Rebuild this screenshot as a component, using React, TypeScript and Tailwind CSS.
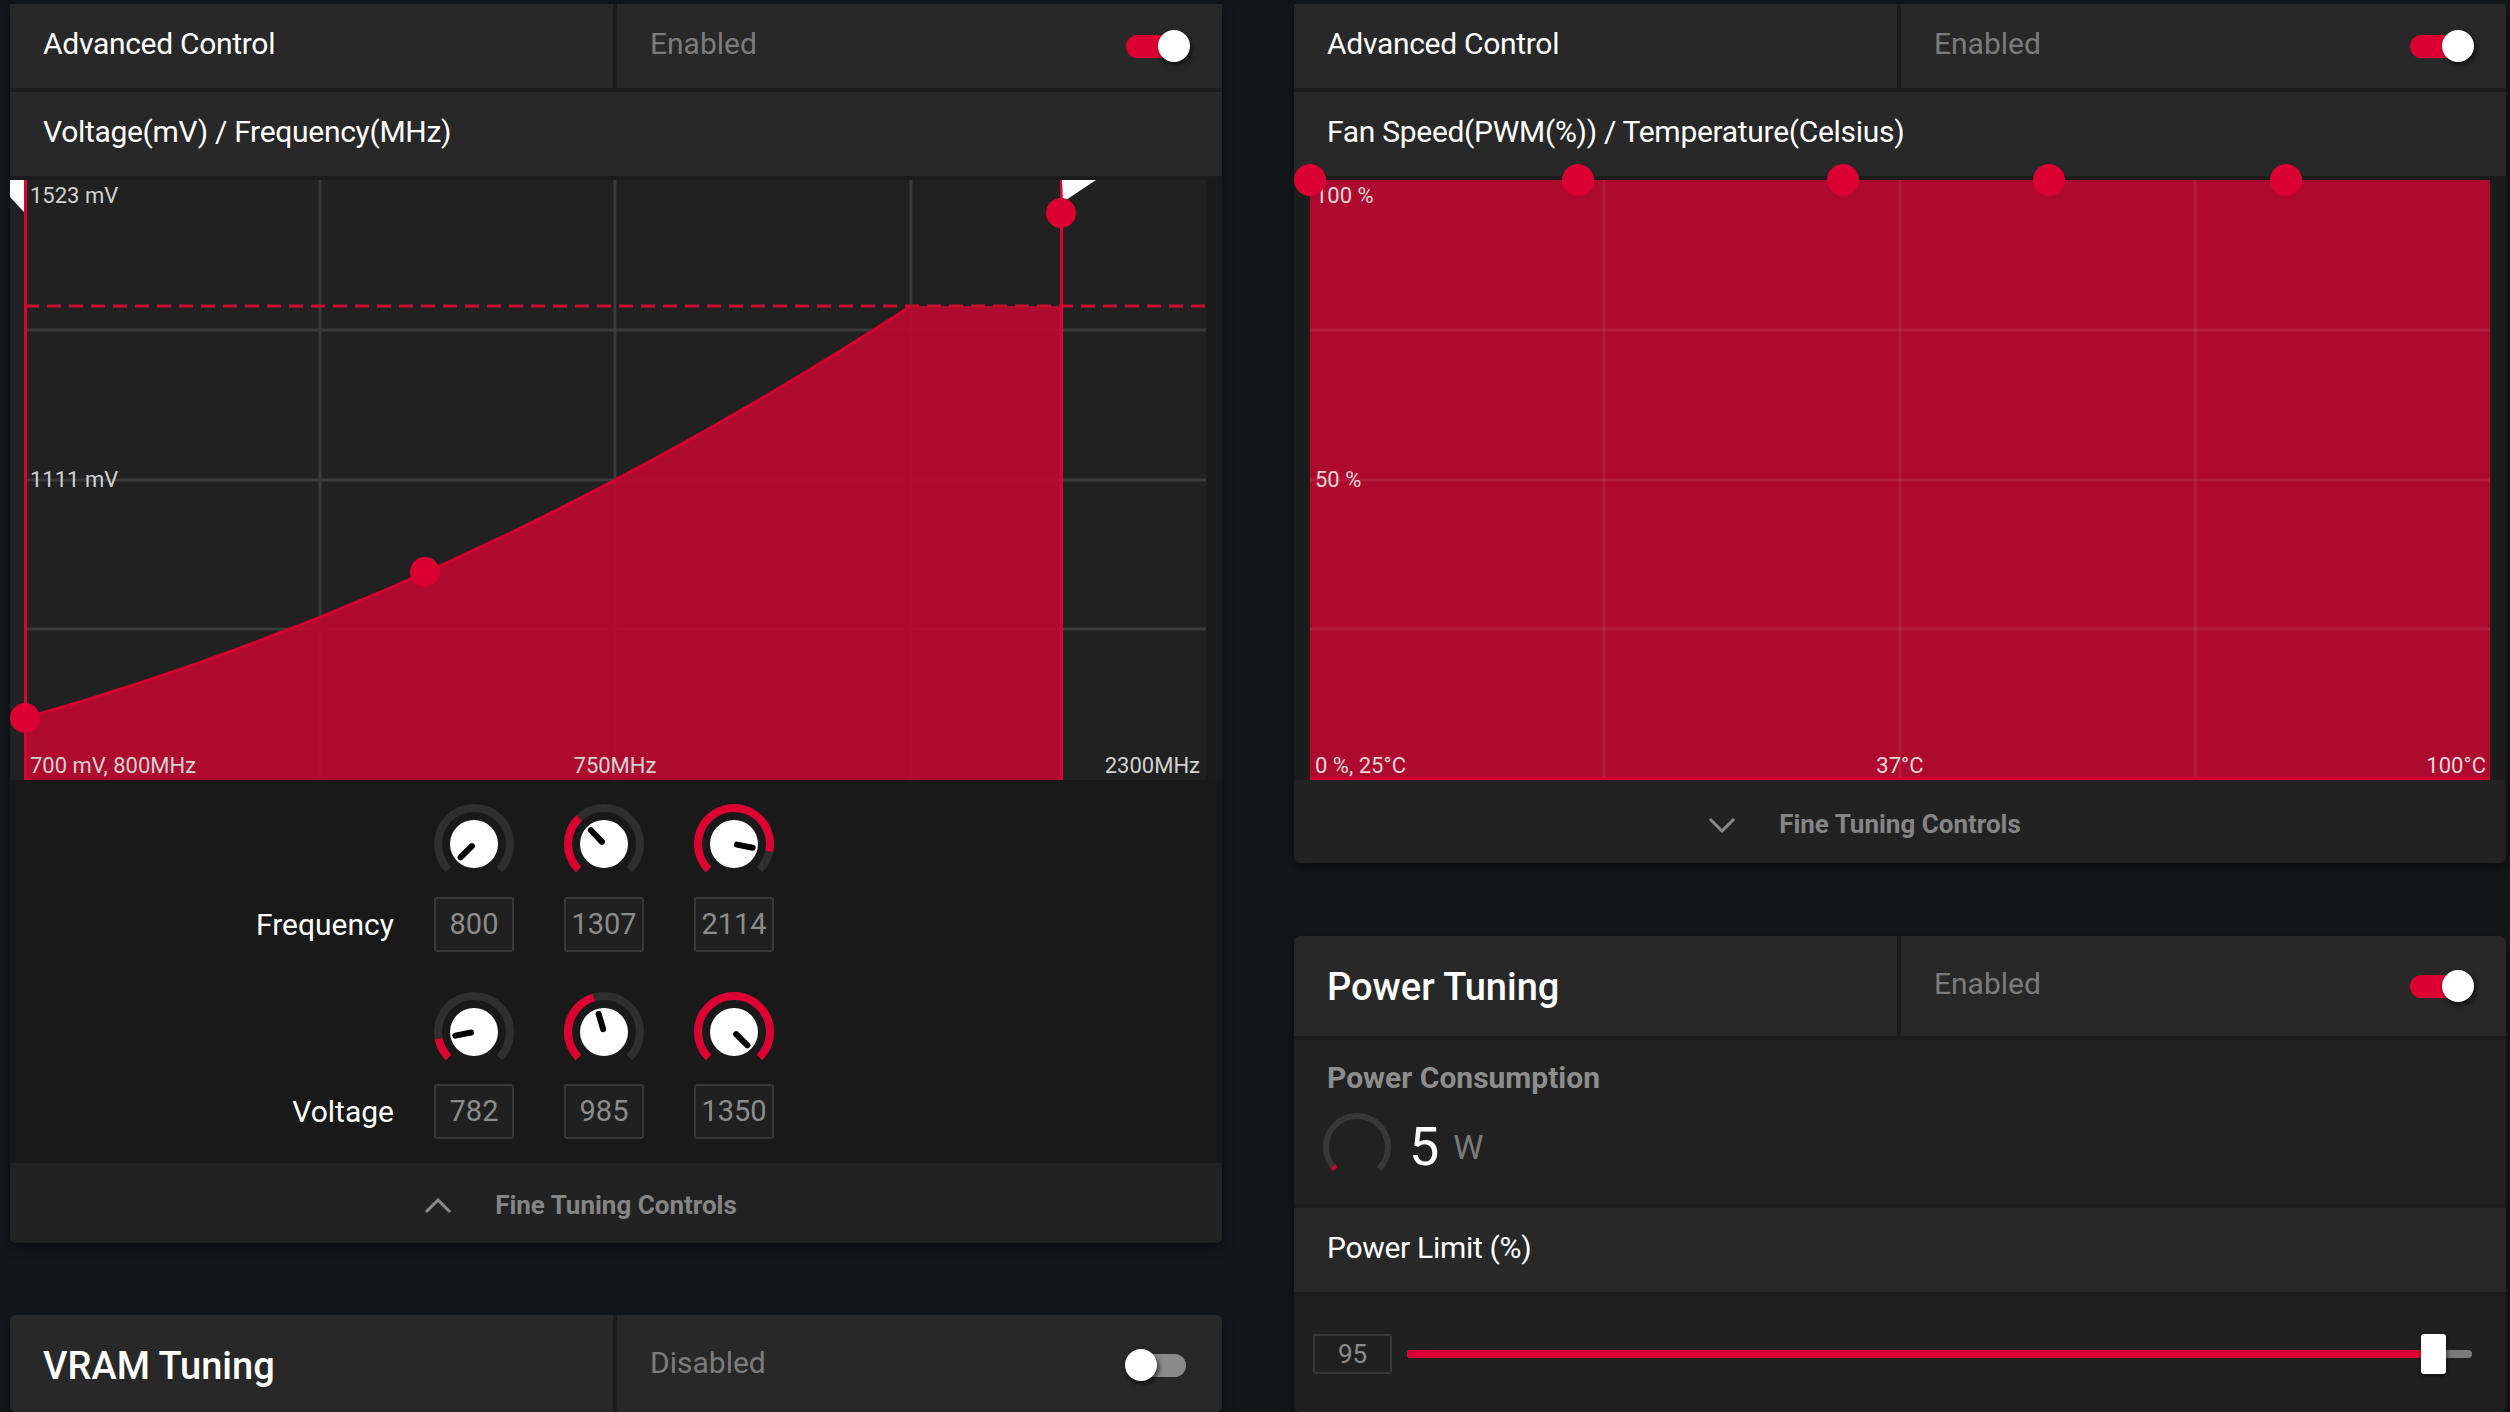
import React from 'react';

const RED = '#dc0032';

function polar(cx: number, cy: number, r: number, deg: number): [number, number] {
  const a = (deg * Math.PI) / 180;
  return [cx + r * Math.cos(a), cy + r * Math.sin(a)];
}

function arc(cx: number, cy: number, r: number, from: number, to: number) {
  const [x1, y1] = polar(cx, cy, r, from);
  const [x2, y2] = polar(cx, cy, r, to);
  const large = to - from > 180 ? 1 : 0;
  return `M ${x1} ${y1} A ${r} ${r} 0 ${large} 1 ${x2} ${y2}`;
}

function Toggle({ on }: { on: boolean }) {
  return (
    <div className="relative w-[65px] h-[32px]">
      <div
        className={
          on
            ? 'absolute left-[1px] right-[4px] top-[5px] h-[23px] rounded-full bg-[#dc0032]'
            : 'absolute left-[1px] right-[4px] top-[5px] h-[23px] rounded-full bg-[#8a8a8a]'
        }
      />
      <div
        className={
          on
            ? 'absolute top-0 right-0 w-[32px] h-[32px] rounded-full bg-white shadow-[2px_3px_5px_rgba(0,0,0,0.6)]'
            : 'absolute top-0 left-0 w-[32px] h-[32px] rounded-full bg-white shadow-[2px_3px_5px_rgba(0,0,0,0.6)]'
        }
      />
    </div>
  );
}

function HeaderRow({ title, status, on, big }: { title: string; status: string; on: boolean; big?: boolean }) {
  return (
    <div className={big ? 'flex h-[100px] gap-[4px]' : 'flex h-[84px] gap-[4px]'}>
      <div
        className={
          big
            ? 'w-[603px] bg-[#282828] flex items-center pl-[33px] pt-[2px]'
            : 'w-[603px] bg-[#282828] flex items-center pl-[33px] pb-[5px]'
        }
      >
        <span className={big ? 'text-[38px] font-medium text-white' : 'text-[30px] tracking-[-0.3px] text-white'}>
          {title}
        </span>
      </div>
      <div className="flex-1 bg-[#282828] flex items-center justify-between pl-[33px] pr-[32px]">
        <span className="text-[30px] text-[#7c7c7c] pb-[5px]">{status}</span>
        <Toggle on={on} />
      </div>
    </div>
  );
}

function TitleRow({ children }: { children: React.ReactNode }) {
  return (
    <div className="h-[84px] mt-[4px] bg-[#282828] flex items-center pl-[33px] pb-[5px] text-[30px] tracking-[-0.3px] text-white">
      {children}
    </div>
  );
}

function Chevron({ up }: { up: boolean }) {
  return (
    <svg width={28} height={16} viewBox="0 0 28 16" className="shrink-0">
      <polyline
        points={up ? '2,14 14,2 26,14' : '2,2 14,14 26,2'}
        fill="none"
        stroke="#8a8a8a"
        strokeWidth={3}
      />
    </svg>
  );
}

function FineTuning({ up, tall }: { up: boolean; tall?: boolean }) {
  return (
    <div
      className={
        tall
          ? 'h-[83px] bg-[#222222] rounded-b-md flex items-center justify-center gap-[43px] pt-[6px]'
          : 'h-[80px] bg-[#222222] rounded-b-md flex items-center justify-center gap-[43px] pt-[5px]'
      }
    >
      <Chevron up={up} />
      <span className="text-[26px] font-bold text-[#858585]">Fine Tuning Controls</span>
      <div className="w-[28px]" />
    </div>
  );
}

function Knob({ value, min, max }: { value: number; min: number; max: number }) {
  const f = Math.max(0, Math.min(1, (value - min) / (max - min)));
  const end = 135 + 270 * f;
  const [px1, py1] = polar(40, 40, 3, end);
  const [px2, py2] = polar(40, 40, 19, end);
  return (
    <svg width={80} height={80} viewBox="0 0 80 80" className="block">
      <path d={arc(40, 40, 36, 135, 405)} fill="none" stroke="#2f2f2f" strokeWidth={8} />
      {f > 0.01 && <path d={arc(40, 40, 36, 135, end)} fill="none" stroke={RED} strokeWidth={8} />}
      <circle cx={40} cy={40} r={24} fill="#ffffff" />
      <line x1={px1} y1={py1} x2={px2} y2={py2} stroke="#000" strokeWidth={6} strokeLinecap="round" />
    </svg>
  );
}

function ValueBox({ v, className }: { v: string; className: string }) {
  return (
    <div
      className={`border-2 border-[#383838] bg-[#202020] rounded-[3px] flex items-center justify-center text-[#8c8c8c] ${className}`}
    >
      {v}
    </div>
  );
}

function VoltFreqChart() {
  const grid = '#3b3b3b';
  return (
    <svg width={1212} height={600} className="block">
      <rect x={0} y={0} width={1212} height={600} fill="#1b1b1b" />
      <rect x={0} y={0} width={1196} height={600} fill="#212121" />
      {[310, 605, 901].map((x) => (
        <line key={x} x1={x} x2={x} y1={0} y2={600} stroke={grid} strokeWidth={3} />
      ))}
      {[150, 300, 449].map((y) => (
        <line key={y} x1={15} x2={1196} y1={y} y2={y} stroke={grid} strokeWidth={3} />
      ))}
      <path d="M15,538 Q458,414 901,126 L1051,126 L1051,600 L15,600 Z" fill="#bb0a30" fillOpacity={0.92} />
      <path d="M15,538 Q458,414 901,126" fill="none" stroke="#d4002e" strokeWidth={3} />
      <line x1={15} x2={1196} y1={126} y2={126} stroke="#c8102e" strokeWidth={3} strokeDasharray="14 8" />
      <line x1={15.5} x2={15.5} y1={0} y2={600} stroke={RED} strokeWidth={3} />
      <line x1={1051.5} x2={1051.5} y1={0} y2={600} stroke={RED} strokeWidth={3} />
      <polygon points="0,0 14,0 14,32 0,17" fill="#ffffff" />
      <polygon points="1052,0 1086,0 1053,22" fill="#ffffff" />
      <g fill="#d2d2d2" fontSize={22}>
        <text x={20} y={23}>1523 mV</text>
        <text x={20} y={307}>1111 mV</text>
        <text x={20} y={593}>700 mV, 800MHz</text>
        <text x={605} y={593} textAnchor="middle">750MHz</text>
        <text x={1190} y={593} textAnchor="end">2300MHz</text>
      </g>
      <circle cx={15} cy={538} r={15} fill={RED} />
      <circle cx={415} cy={392} r={15} fill={RED} />
      <circle cx={1051} cy={33} r={15} fill={RED} />
    </svg>
  );
}

function FanChart() {
  const pts = [16, 284, 549, 755, 992];
  const grid = 'rgba(255,255,255,0.07)';
  return (
    <svg width={1212} height={600} className="block overflow-visible">
      <rect x={0} y={0} width={1212} height={600} fill="#1c1c1c" />
      <rect x={16} y={0} width={1180} height={600} fill="#ae0a2e" />
      {[310, 606, 901].map((x) => (
        <line key={x} x1={x} x2={x} y1={0} y2={597} stroke={grid} strokeWidth={3} />
      ))}
      {[150, 300, 449].map((y) => (
        <line key={y} x1={16} x2={1196} y1={y} y2={y} stroke={grid} strokeWidth={3} />
      ))}
      <line x1={16} x2={1196} y1={598.5} y2={598.5} stroke="#d50032" strokeWidth={3} />
      <g fill="#e6d6d9" fontSize={22}>
        <text x={21} y={23}>100 %</text>
        <text x={21} y={307}>50 %</text>
        <text x={21} y={593}>0 %, 25°C</text>
        <text x={606} y={593} textAnchor="middle">37°C</text>
        <text x={1192} y={593} textAnchor="end">100°C</text>
      </g>
      {pts.map((x) => (
        <circle key={x} cx={x} cy={0} r={16} fill={RED} />
      ))}
    </svg>
  );
}

function Gauge() {
  return (
    <svg width={68} height={68} viewBox="0 0 68 68" className="block shrink-0">
      <path d={arc(34, 34, 31, 135, 405)} fill="none" stroke="#383838" strokeWidth={6} />
      <path d={arc(34, 34, 31, 135, 141)} fill="none" stroke={RED} strokeWidth={6} />
    </svg>
  );
}

function KnobSection() {
  const freq = [800, 1307, 2114];
  const volt = [782, 985, 1350];
  return (
    <div className="h-[383px] bg-[#191919] pt-[24px]">
      <div className="flex">
        <div className="w-[384px]" />
        <div className="ml-[40px] flex gap-[50px]">
          {freq.map((v) => (
            <Knob key={v} value={v} min={800} max={2300} />
          ))}
        </div>
      </div>
      <div className="flex items-center mt-[13px]">
        <div className="w-[384px] text-right text-[30px] text-white">Frequency</div>
        <div className="ml-[40px] flex gap-[50px]">
          {freq.map((v) => (
            <ValueBox key={v} v={String(v)} className="w-[80px] h-[55px] text-[29px]" />
          ))}
        </div>
      </div>
      <div className="flex mt-[40px]">
        <div className="w-[384px]" />
        <div className="ml-[40px] flex gap-[50px]">
          {volt.map((v) => (
            <Knob key={v} value={v} min={700} max={1350} />
          ))}
        </div>
      </div>
      <div className="flex items-center mt-[12px]">
        <div className="w-[384px] text-right text-[30px] text-white">Voltage</div>
        <div className="ml-[40px] flex gap-[50px]">
          {volt.map((v) => (
            <ValueBox key={v} v={String(v)} className="w-[80px] h-[55px] text-[29px]" />
          ))}
        </div>
      </div>
    </div>
  );
}

export default function App() {
  return (
    <div className="w-[2510px] h-[1412px] overflow-hidden bg-[#14171a] font-[Roboto,sans-serif] flex gap-[72px] pl-[10px] pt-[4px]">
      {/* Left column: engine clock tuning */}
      <div className="w-[1212px] flex flex-col shrink-0">
        <div className="bg-[#1c1c1c] rounded-b-md shadow-[0_4px_12px_rgba(0,0,0,0.5)]">
          <HeaderRow title="Advanced Control" status="Enabled" on />
          <TitleRow>Voltage(mV) / Frequency(MHz)</TitleRow>
          <div className="mt-[4px]">
            <VoltFreqChart />
          </div>
          <KnobSection />
          <FineTuning up />
        </div>

        <div className="mt-[72px] bg-[#1c1c1c] rounded-md overflow-hidden shadow-[0_4px_12px_rgba(0,0,0,0.5)]">
          <HeaderRow title="VRAM Tuning" status="Disabled" on={false} big />
        </div>
      </div>

      {/* Right column: fan + power tuning */}
      <div className="w-[1212px] flex flex-col shrink-0">
        <div className="bg-[#1c1c1c] rounded-b-md shadow-[0_4px_12px_rgba(0,0,0,0.5)]">
          <HeaderRow title="Advanced Control" status="Enabled" on />
          <TitleRow>Fan Speed(PWM(%)) / Temperature(Celsius)</TitleRow>
          <div className="mt-[4px]">
            <FanChart />
          </div>
          <FineTuning up={false} tall />
        </div>

        <div className="mt-[73px] bg-[#1c1c1c] rounded-md overflow-hidden shadow-[0_4px_12px_rgba(0,0,0,0.5)]">
          <HeaderRow title="Power Tuning" status="Enabled" on big />
          <div className="mt-[4px] h-[164px] bg-[#212121] pl-[33px] pt-[20px]">
            <div className="text-[30px] leading-[36px] font-bold text-[#8d8d8d]">Power Consumption</div>
            <div className="flex items-center mt-[17px] ml-[-4px]">
              <Gauge />
              <span className="ml-[18px] text-[54px] leading-none text-white">5</span>
              <span className="ml-[14px] text-[34px] leading-none text-[#7a7a7a]">W</span>
            </div>
          </div>
          <TitleRow>Power Limit (%)</TitleRow>
          <div className="mt-[4px] h-[116px] bg-[#202020] flex items-center pl-[19px] pr-[34px]">
            <ValueBox v="95" className="w-[79px] h-[40px] text-[26px]" />
            <div className="relative flex-1 ml-[15px] h-[8px] rounded-full bg-[#7a7a7a]">
              <div className="absolute left-0 top-0 h-[8px] w-[96.3%] rounded-full bg-[#dc0032]" />
              <div className="absolute top-[-16px] left-[calc(96.3%-12px)] w-[25px] h-[40px] rounded-[3px] bg-white shadow-[1px_2px_4px_rgba(0,0,0,0.6)]" />
            </div>
          </div>
        </div>
      </div>
    </div>
  );
}
